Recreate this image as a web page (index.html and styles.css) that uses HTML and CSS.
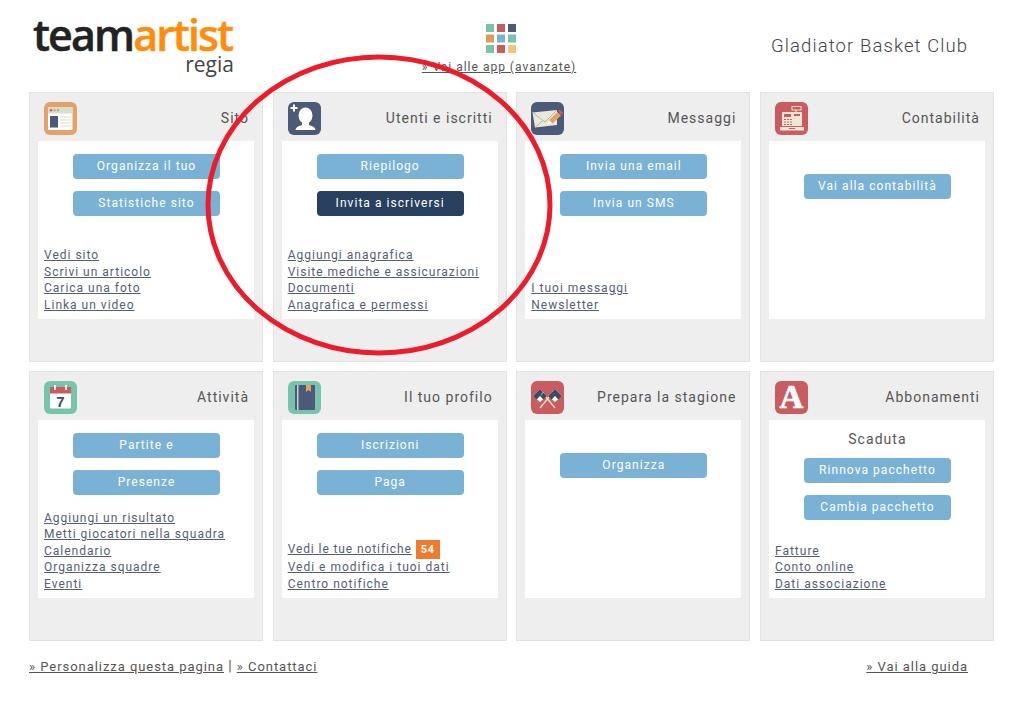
FILE: index.html
```html
<!DOCTYPE html>
<html lang="it">
<head>
<meta charset="utf-8">
<title>Teamartist regia</title>
<link rel="stylesheet" href="styles.css">
</head>
<body>
<div class="page">
  <header class="top">
    <div class="logo">
      <div class="logo-main">team<span class="logo-accent">artist</span></div>
      <div class="logo-sub">regia</div>
    </div>
    <div class="apps">
      <svg class="apps-icon" width="34" height="33" viewBox="0 0 34 33">
        <rect x=".5" y=".5" width="33" height="32" fill="none" stroke="#f7f7f7"/>
        <rect x="4" y="2" width="8" height="8" fill="#76c4ab"/><rect x="15" y="2" width="8" height="8" fill="#c95c5f"/><rect x="26" y="2" width="8" height="8" fill="#4a5a78"/>
        <rect x="4" y="12.500" width="8" height="8" fill="#e19a5c"/><rect x="15" y="12.500" width="8" height="8" fill="#7ab2d5"/><rect x="26" y="12.500" width="8" height="8" fill="#76c4ab"/>
        <rect x="4" y="23" width="8" height="8" fill="#76c4ab"/><rect x="15" y="23" width="8" height="8" fill="#c95c5f"/><rect x="26" y="23" width="8" height="8" fill="#f3c479"/>
      </svg>
      <a href="#" class="apps-link">» Vai alle app (avanzate)</a>
    </div>
    <div class="club">Gladiator Basket Club</div>
  </header>

  <main class="grid">
    <section class="card">
      <div class="card-head">
        <svg class="ico" viewBox="0 0 33 33"><rect width="33" height="33" rx="6" fill="#e5a268"/><rect x="4" y="5" width="24.500" height="23" rx="1" fill="#fff"/><rect x="4" y="5" width="24.500" height="6.500" fill="#dcdccb"/><circle cx="7" cy="8.200" r="1.200" fill="#c95c5f"/><circle cx="10.500" cy="8.200" r="1.200" fill="#e5a268"/><circle cx="14" cy="8.200" r="1.200" fill="#76c4ab"/><rect x="6" y="14" width="8" height="11.500" fill="#4a5a78"/><path d="M16 15h10.500M16 18h10.500M16 21h10.500M16 24h10.500" stroke="#dcdccb"/></svg>
        <h2 class="card-title">Sito</h2>
      </div>
      <div class="card-body">
        <div class="btns"><a class="btn" href="#">Organizza il tuo</a><a class="btn" href="#">Statistiche sito</a></div>
        <div class="links"><a href="#">Vedi sito</a><a href="#">Scrivi un articolo</a><a href="#">Carica una foto</a><a href="#">Linka un video</a></div>
      </div>
    </section>

    <section class="card">
      <div class="card-head">
        <svg class="ico" viewBox="0 0 33 33"><rect width="33" height="33" rx="6" fill="#4a5a78"/><ellipse cx="17.500" cy="13.500" rx="7" ry="8" fill="#fff"/><path d="M14 19h7v4c3 1 6 2 6.500 5h-20c.500-3 3.500-4 6.500-5z" fill="#fff"/><path d="M6 2.500v7M2.500 6h7" stroke="#fff" stroke-width="2"/></svg>
        <h2 class="card-title">Utenti e iscritti</h2>
      </div>
      <div class="card-body">
        <div class="btns"><a class="btn" href="#">Riepilogo</a><a class="btn btn-dark" href="#">Invita a iscriversi</a></div>
        <div class="links"><a href="#">Aggiungi anagrafica</a><a href="#">Visite mediche e assicurazioni</a><a href="#">Documenti</a><a href="#">Anagrafica e permessi</a></div>
      </div>
    </section>

    <section class="card">
      <div class="card-head">
        <svg class="ico" viewBox="0 0 33 33"><rect width="33" height="33" rx="6" fill="#4a5a78"/><path d="M1.500 10.500 26 8v15L4 25.500z" fill="#e9e9d8"/><path d="M1.500 10.500 14 20l12-12M4 25.500l8-7" fill="none" stroke="#b8b8a4"/><path d="M15 23.500l3-5.500 8.500-8 3.500 3.500-8.500 8z" fill="#e8a25e"/><path d="M27 9l1.500-1.500 3.500 3.500-1.500 2z" fill="#c95c5f"/><path d="M15 23.500l3-5.500 3.500 3.500z" fill="#fff"/></svg>
        <h2 class="card-title">Messaggi</h2>
      </div>
      <div class="card-body">
        <div class="btns"><a class="btn" href="#">Invia una email</a><a class="btn" href="#">Invia un SMS</a></div>
        <div class="links"><a href="#">I tuoi messaggi</a><a href="#">Newsletter</a></div>
      </div>
    </section>

    <section class="card">
      <div class="card-head">
        <svg class="ico" viewBox="0 0 33 33"><rect width="33" height="33" rx="6" fill="#c95c5f"/><rect x="17" y="4.500" width="9" height="3.500" fill="none" stroke="#f2e6d8"/><path d="M21 8v3" stroke="#f2e6d8"/><rect x="7" y="10" width="20" height="14" rx="1" fill="#f2e6d8"/><rect x="9" y="12" width="7" height="3" fill="#c95c5f"/><rect x="19" y="12" width="6" height="2" fill="#c95c5f"/><path d="M9 17.500h8M9 20h8M9 22.500h8" stroke="#c95c5f" stroke-dasharray="2 1"/><rect x="5" y="25" width="24" height="3.500" fill="#f2e6d8"/><rect x="14" y="26" width="6" height="1" fill="#c95c5f"/></svg>
        <h2 class="card-title">Contabilità</h2>
      </div>
      <div class="card-body card-body-offset">
        <div class="btns"><a class="btn" href="#">Vai alla contabilità</a></div>
      </div>
    </section>

    <section class="card">
      <div class="card-head">
        <svg class="ico" viewBox="0 0 33 33"><rect width="33" height="33" rx="6" fill="#76c4ab"/><rect x="6" y="6" width="21" height="21.500" rx="1" fill="#fff"/><rect x="6" y="6" width="21" height="6.500" fill="#c95c5f"/><path d="M11 4v5M22 4v5" stroke="#eee" stroke-width="2"/><text x="16.500" y="26" class="ico-num">7</text></svg>
        <h2 class="card-title">Attività</h2>
      </div>
      <div class="card-body">
        <div class="btns"><a class="btn" href="#">Partite e</a><a class="btn" href="#">Presenze</a></div>
        <div class="links"><a href="#">Aggiungi un risultato</a><a href="#">Metti giocatori nella squadra</a><a href="#">Calendario</a><a href="#">Organizza squadre</a><a href="#">Eventi</a></div>
      </div>
    </section>

    <section class="card">
      <div class="card-head">
        <svg class="ico" viewBox="0 0 33 33"><rect width="33" height="33" rx="6" fill="#76c4ab"/><rect x="7" y="4" width="20" height="25" rx="1" fill="#4a5a78"/><rect x="9" y="4" width="1.500" height="25" fill="#c9d0d8"/><path d="M18 4h5v7l-2.500-2-2.500 2z" fill="#e8a25e"/></svg>
        <h2 class="card-title">Il tuo profilo</h2>
      </div>
      <div class="card-body">
        <div class="btns"><a class="btn" href="#">Iscrizioni</a><a class="btn" href="#">Paga</a></div>
        <div class="links"><div class="link-row"><a href="#" class="link-tight">Vedi le tue notifiche</a><span class="badge">54</span></div><a href="#">Vedi e modifica i tuoi dati</a><a href="#">Centro notifiche</a></div>
      </div>
    </section>

    <section class="card">
      <div class="card-head">
        <svg class="ico" viewBox="0 0 33 33"><rect width="33" height="33" rx="6" fill="#c95c5f"/><path d="M10 10l14 17M23 10L9 27" stroke="#f0dcc0" stroke-width="1.500"/><path d="M2 15l7-7 7 7-7 6z" fill="#fff"/><path d="M31 15l-7-7-7 7 7 6z" fill="#fff"/><path d="M5.500 11.500l3.500 3.500-3.500 3.500-3.500-3.500zM12.500 11.500l3.500 3.500-3.500 3.500-3.500-3.500zM9 8l3 3-3 4-3.500-3.500zM20.500 11.500l3.500 3.500-3.500 3.500-3.500-3.500zM27.500 11.500l3.500 3.500-3.500 3.500-3.500-3.500zM24 8l3.500 3.500-3.500 3.500-3.500-3.500z" fill="#3c4a64"/></svg>
        <h2 class="card-title">Prepara la stagione</h2>
      </div>
      <div class="card-body card-body-offset">
        <div class="btns"><a class="btn" href="#">Organizza</a></div>
      </div>
    </section>

    <section class="card">
      <div class="card-head">
        <svg class="ico" viewBox="0 0 33 33"><rect width="33" height="33" rx="6" fill="#c95c5f"/><text x="16.500" y="27" class="ico-letter">A</text></svg>
        <h2 class="card-title">Abbonamenti</h2>
      </div>
      <div class="card-body">
        <div class="status">Scaduta</div>
        <div class="btns"><a class="btn" href="#">Rinnova pacchetto</a><a class="btn" href="#">Cambia pacchetto</a></div>
        <div class="links"><a href="#">Fatture</a><a href="#">Conto online</a><a href="#">Dati associazione</a></div>
      </div>
    </section>
  </main>

  <footer class="foot">
    <div><a href="#">» Personalizza questa pagina</a> <span class="sep">|</span> <a href="#">» Contattaci</a></div>
    <a href="#" class="guide">» Vai alla guida</a>
  </footer>
</div>

<svg class="ring" width="350" height="306" viewBox="0 0 350 306">
  <ellipse cx="174" cy="153" rx="171" ry="148" fill="none" stroke="#ed1c2b" stroke-width="5"/>
</svg>
</body>
</html>
```
FILE: styles.css
```css
* { box-sizing: border-box; }
html, body { margin: 0; padding: 0; background: #fff; }
body {
  font-family: Roboto, "Liberation Sans", Arial, sans-serif;
  color: #555;
  width: 1024px;
  height: 717px;
  overflow: hidden;
  position: relative;
}
a { color: #555e78; text-decoration: underline; }
.page { padding: 0 30px 0 29px; width: 1024px; }
.top { height: 92px; position: relative; display: flex; }
.logo { width: 205px; padding: 15px 0 0 4px; }
.logo-main {
  font-family: "Open Sans", sans-serif;
  font-size: 43px;
  font-weight: 600;
  line-height: 40px;
  letter-spacing: -1.900px;
  color: #222;
  -webkit-text-stroke: .5px currentColor;
  white-space: nowrap;
}
.logo-accent { color: #ff8c0a; }
.logo-sub {
  font-family: "Open Sans", sans-serif;
  font-size: 21px;
  line-height: 18px;
  text-align: right;
  color: #444;
}
.apps {
  position: absolute;
  left: 393px;
  top: 22px;
  width: 154px;
  display: flex;
  flex-direction: column;
  align-items: center;
}
.apps-icon { display: block; }
.apps-link { font-size: 12px; letter-spacing: 1px; line-height: 15px; margin-top: 5px; white-space: nowrap; color: #555; }
.club {
  position: absolute;
  left: 742px;
  top: 34px;
  font-size: 18.500px;
  font-weight: 300;
  letter-spacing: 1.100px;
  line-height: 24px;
  color: #444;
  white-space: nowrap;
}
.grid {
  display: grid;
  grid-template-columns: repeat(4, 234px);
  grid-auto-rows: 270px;
  column-gap: 9.670px;
  row-gap: 9px;
}
.card {
  background: #eee;
  border: 1px solid #e2e2e2;
  padding: 9px 8px 0;
}
.card-head { display: flex; align-items: center; justify-content: space-between; height: 33px; margin: 0 5px 6px 6px; }
.ico { width: 33px; height: 33px; display: block; flex: none; overflow: visible; }
.ico-num { font: 700 15px "Liberation Sans", sans-serif; fill: #3c4a64; text-anchor: middle; }
.ico-letter { font: 700 33px "Liberation Serif", serif; fill: #fff; stroke: #fff; stroke-width: .7px; text-anchor: middle; }
.card-title { margin: 0; font-size: 14px; font-weight: 400; letter-spacing: 1px; color: #555; line-height: 33px; white-space: nowrap; }
.card-body {
  background: #fff;
  height: 178px;
  padding: 13px 5px 0 6px;
  display: flex;
  flex-direction: column;
}
.card-body-offset { padding-top: 33px; }
.btns { display: flex; flex-direction: column; align-items: center; gap: 12px; }
.btn {
  display: block;
  width: 147px;
  height: 25px;
  line-height: 25px;
  background: #7ab2d5;
  border-radius: 4px;
  color: #fff;
  text-align: center;
  text-decoration: none;
  font-size: 12px;
  font-weight: 400;
  letter-spacing: 1.050px;
}
.btn-dark { background: #27405f; }
.links { margin-top: auto; padding-bottom: 6px; display: flex; flex-direction: column; align-items: flex-start; }
.links a { font-size: 12px; letter-spacing: 1px; line-height: 16.500px; white-space: nowrap; }
.links .link-tight { letter-spacing: .9px; }
.link-row { display: flex; align-items: center; gap: 4px; height: 19px; }
.badge { background: #f07a2e; color: #fff; font-size: 11px; font-weight: 700; letter-spacing: .6px; width: 24px; height: 19px; line-height: 19px; text-align: center; }
.status { font-size: 14px; letter-spacing: 1.050px; text-align: center; line-height: 17px; margin: -2px 0 10px; color: #555; }
.foot { display: flex; justify-content: space-between; padding-right: 26px; margin-top: 17px; font-size: 13px; letter-spacing: .950px; line-height: 18px; color: #555; }
.foot a { color: #555; }
.sep { color: #555; font-size: 14px; line-height: 1; }
.ring { position: absolute; left: 205px; top: 52px; pointer-events: none; }
```
